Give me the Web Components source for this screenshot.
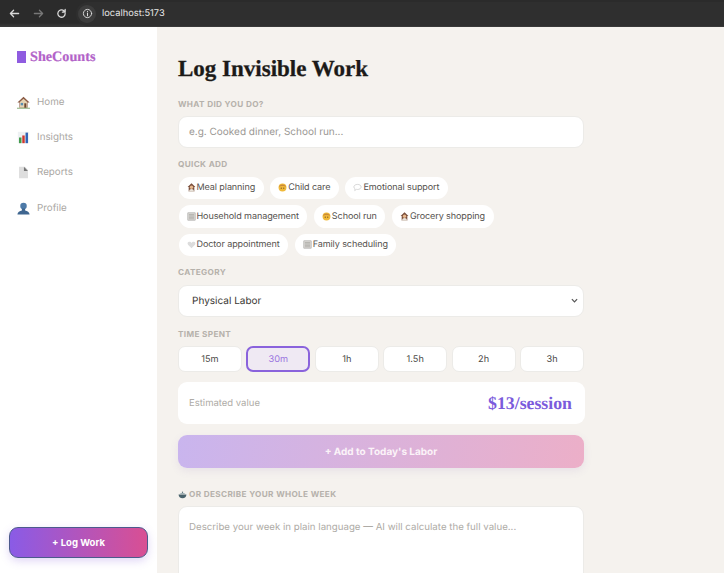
<!DOCTYPE html>
<html><head><meta charset="utf-8">
<style>
html,body{margin:0;padding:0;height:573px;overflow:hidden;background:#f5f2ee;font-family:"Inter","Noto Sans",sans-serif;text-rendering:geometricPrecision}
</style></head><body>
<app-shell>
  <browser-bar slot="bar" url="localhost:5173"></browser-bar>
  <side-bar slot="side"></side-bar>
  <log-form slot="main"></log-form>
</app-shell>
<script>
const EM={
 house:`<svg viewBox="0 0 16 16"><path d="M8 1 .5 8h2.500v6.500h10V8h2.500z" fill="#8a5a44"/><path d="M3.500 7.500 8 3.500l4.500 4v7h-9z" fill="#e6d3b3"/><rect x="4.500" y="8.500" width="3" height="3" fill="#5b8fb0"/><rect x="9" y="9" width="2.500" height="5.500" fill="#6d4630"/><path d="M0 14.500h16v1H0z" fill="#6f9a5a"/></svg>`,
 cook:`<svg viewBox="0 0 16 16"><path d="M8 .5 1 7h2v8h10V7h2z" fill="#7a4f3c"/><circle cx="8" cy="7.500" r="3" fill="#e8b98f"/><path d="M3.500 15.500c0-3 1.500-5 4.500-5s4.500 2 4.500 5z" fill="#e9e3db"/></svg>`,
 chart:`<svg viewBox="0 0 16 16"><rect x="1" y="1" width="14" height="14" fill="#eef1f3"/><rect x="2.500" y="8" width="3" height="7" fill="#3f9a4a"/><rect x="6.500" y="5.500" width="3" height="9.500" fill="#d0382e"/><rect x="10.500" y="2" width="3" height="13" fill="#2f62b5"/></svg>`,
 doc:`<svg viewBox="0 0 16 16"><path d="M2.500 1H10l3.500 4v10h-11z" fill="#dedede"/><path d="M8.500 1l5 5h-5z" fill="#777"/></svg>`,
 person:`<svg viewBox="0 0 16 16"><circle cx="8" cy="5" r="4" fill="#4d7aa8"/><path d="M.5 15.500c0-3 3-4.500 5.500-5V8h4v2.500c2.500.5 5.500 2 5.500 5z" fill="#3f6690"/></svg>`,
 face:`<svg viewBox="0 0 16 16"><circle cx="8" cy="8" r="7" fill="#f0b93a"/><path d="M1.500 7c1-6 12-6 13 0-3-2-10-2-13 0z" fill="#c98a3a"/><circle cx="5.800" cy="9.200" r="1" fill="#6b4a20"/><circle cx="10.200" cy="9.200" r="1" fill="#6b4a20"/></svg>`,
 bubble:`<svg viewBox="0 0 16 16"><path d="M8 2.500c3.800 0 6.500 2 6.500 4.500S11.800 11.500 8 11.500c-.7 0-1.400-.1-2-.2L3 13.500l.6-3.200C2.300 9.500 1.500 8.300 1.500 7 1.500 4.500 4.200 2.500 8 2.500z" fill="#fff" stroke="#bbb"/></svg>`,
 memo:`<svg viewBox="0 0 16 16"><rect x="1.500" y="1.500" width="13" height="13" fill="#d8d6d2" stroke="#8e8c88" stroke-width=".8"/><path d="M3.500 4.500h9M3.500 7h9M3.500 9.500h9M3.500 12h9" stroke="#8e8c88" stroke-width=".8"/></svg>`,
 heart:`<svg viewBox="0 0 16 16"><path d="M8 14.500 1.800 8.300C.2 6.500 1 3 4.300 3 6 3 7.300 4 8 5.200 8.700 4 10 3 11.700 3 15 3 15.800 6.500 14.200 8.300z" fill="#dcdcdc"/></svg>`,
 pot:`<svg viewBox="0 0 16 16"><path d="M1 8h14c0 4-3 6.500-7 6.500S1 12 1 8z" fill="#49626b"/><path d="M3 7c1-2.500 9-2.500 10 0z" fill="#9fb0b5"/><rect x="7" y="3" width="2" height="2" fill="#49626b"/></svg>`
};
function def(name,css,html){
  customElements.define(name,class extends HTMLElement{
    connectedCallback(){ if(this.shadowRoot)return;
      const r=this.attachShadow({mode:"open"});
      r.innerHTML=`<style>${css}</style>`+(typeof html==="function"?html(this):html);
    }
  });
}
const SERIF='"Liberation Serif","DejaVu Serif",serif';

def("app-shell",`
:host{display:grid;grid-template-columns:157px 1fr;grid-template-rows:27px 546px;width:724px;height:573px;overflow:hidden}
::slotted([slot=bar]){grid-column:1/3}
`,`<slot name="bar"></slot><slot name="side"></slot><slot name="main"></slot>`);

def("browser-bar",`
:host{display:flex;align-items:center;height:27px;box-sizing:border-box;background:linear-gradient(#2b2b2b,#2b2b2b 85%,#3b3b3b);color:#e6e6e6;font:400 9.300px "Inter",sans-serif;padding-left:9px}
svg{width:11px;height:11px;fill:none;stroke-width:1.400;stroke-linecap:round;stroke-linejoin:round;flex:none}
.nav{display:flex;gap:12.500px;margin-right:9px}
.omni{display:flex;align-items:center;gap:6px;flex:1;height:24px;background:#2f2f2f;border-radius:12px 0 0 12px;padding-left:2px}
.info{width:18px;height:18px;border-radius:50%;background:#3d3d3d;display:flex;align-items:center;justify-content:center}
`,h=>`<div class="nav">
<svg viewBox="0 0 12 12" stroke="#d8d8d8"><path d="M10.500 6h-9M5 2.500 1.500 6 5 9.500"/></svg>
<svg viewBox="0 0 12 12" stroke="#777"><path d="M1.500 6h9M7 2.500 10.500 6 7 9.500"/></svg>
<svg viewBox="0 0 12 12" stroke="#d8d8d8"><path d="M10 6a4 4 0 1 1-1.200-2.800L10 4.400M10 1.500v3H7"/></svg>
</div><div class="omni"><span class="info"><svg viewBox="0 0 12 12" stroke="#ddd"><circle cx="6" cy="6" r="4.500" stroke-width="1"/><path d="M6 5.500v3M6 3.500v.2" stroke-width="1.100"/></svg></span><span>${h.getAttribute("url")}</span></div>`);

def("nav-item",`
:host{display:flex;align-items:center;gap:7px;height:35.400px;font:400 9.800px "Inter",sans-serif;color:#aaa7a3}
svg{width:13px;height:13px;display:block}
`,h=>EM[h.getAttribute("icon")]+`<slot></slot>`);

def("side-bar",`
:host{display:flex;flex-direction:column;background:#fff;padding:0 9px 15px;box-sizing:border-box;height:546px}
.logo{display:flex;align-items:center;gap:4px;margin:23px 0 0 8px;height:14px;font:700 14.200px ${SERIF};color:#b263c9;-webkit-text-stroke:.2px #b263c9}
.sq{width:9px;height:12px;background:#8f5ce0}
nav{display:flex;flex-direction:column;margin:20.400px 0 0 8px}
.spacer{flex:1}
button{height:31px;width:139px;box-sizing:border-box;border-radius:9px;border:1.500px solid #4c5a8c;background:linear-gradient(90deg,#8a5be6,#d94f93);color:#fff;font:700 9.500px "Inter",sans-serif;box-shadow:0 3px 9px rgba(130,90,220,.25)}
`,`<div class="logo"><span class="sq"></span><span>SheCounts</span></div>
<nav><nav-item icon="house">Home</nav-item><nav-item icon="chart">Insights</nav-item><nav-item icon="doc">Reports</nav-item><nav-item icon="person">Profile</nav-item></nav>
<div class="spacer"></div><button>+ Log Work</button>`);

def("quick-chip",`
:host{display:inline-flex;align-items:center;gap:1px;height:22.500px;padding:0 8.500px 0 8px;background:#fff;border-radius:12px;font:400 9.050px "Inter",sans-serif;color:#55524e;letter-spacing:-.1px;white-space:nowrap}
svg{width:9px;height:9px;display:block;flex:none}
`,h=>EM[h.getAttribute("icon")]+`<slot></slot>`);

def("field-label",`
:host{display:flex;align-items:center;gap:2px;font:700 8.200px "Inter",sans-serif;letter-spacing:.35px;color:#b5b1ab;text-transform:uppercase;height:12px}
svg{width:9px;height:9px}
`,h=>(h.getAttribute("icon")?EM[h.getAttribute("icon")]:"")+`<slot></slot>`);

def("time-pills",`
:host{display:grid;grid-template-columns:repeat(6,1fr);gap:4.500px;height:26px}
span{display:flex;align-items:center;justify-content:center;background:#fff;border:1px solid #ecebe8;border-radius:7px;font:400 9.200px "Inter",sans-serif;color:#4c4a47;box-sizing:border-box}
span.on{background:#efe9f3;border:2px solid #8a63dc;color:#9a75e0}
`,`<span>15m</span><span class="on">30m</span><span>1h</span><span>1.5h</span><span>2h</span><span>3h</span>`);

def("log-form",`
:host{display:block;background:#f5f2ee;padding:0 0 0 21px;height:546px;overflow:hidden;box-sizing:border-box}
.col{width:406px;display:flex;flex-direction:column}
h1{margin:29px 0 0;font:700 23px/26px ${SERIF};color:#1c1a18;height:26px;white-space:nowrap;-webkit-text-stroke:.3px #1c1a18}
field-label.l1{margin-top:16px}
.box{display:flex;align-items:center;background:#fff;border:1px solid #ecebe8;border-radius:9px;box-sizing:border-box}
.input{height:32px;margin-top:6px;padding-left:10px;font:400 10px "Inter",sans-serif;color:#9a9793}
.l2{margin-top:10px}
.chips{display:flex;flex-wrap:wrap;gap:6px 6.500px;margin-top:6.500px;width:340px;padding-left:.5px}
.l3{margin-top:10px}
.select{height:32.500px;margin-top:6.500px;padding:0 5px 0 13px;justify-content:space-between;font:400 10px "Inter",sans-serif;color:#3a3835}
.select svg{width:7px;height:7px;fill:none;stroke:#555;stroke-width:1.400}
.l4{margin-top:11px}
time-pills{margin-top:6px}
.est{height:42px;margin-top:10px;padding:0 13px 0 11px;justify-content:space-between;border:none;width:407px}
.est span{font:400 9.500px "Inter",sans-serif;color:#aeaba6}
.est b{font:700 17.800px ${SERIF};color:#7b5bdc}
.add{height:33px;margin-top:11px;width:406px;border-radius:9px;display:flex;align-items:center;justify-content:center;background:linear-gradient(100deg,#c9b5ee,#ecafc8);color:#fbf3f8;font:700 10px "Inter",sans-serif;box-shadow:0 3px 9px rgba(120,90,180,.1)}
.l5{margin-top:20px}
.ta{height:90px;margin-top:6px;padding:14.500px 10px;align-items:flex-start;font:400 9.700px "Inter",sans-serif;color:#aeaba6}
`,`<div class="col">
<h1>Log Invisible Work</h1>
<field-label class="l1">What did you do?</field-label>
<div class="box input">e.g. Cooked dinner, School run...</div>
<field-label class="l2">Quick add</field-label>
<div class="chips">
<quick-chip icon="cook">Meal planning</quick-chip><quick-chip icon="face">Child care</quick-chip><quick-chip icon="bubble">Emotional support</quick-chip>
<quick-chip icon="memo">Household management</quick-chip><quick-chip icon="face">School run</quick-chip><quick-chip icon="cook">Grocery shopping</quick-chip>
<quick-chip icon="heart">Doctor appointment</quick-chip><quick-chip icon="memo">Family scheduling</quick-chip>
</div>
<field-label class="l3">Category</field-label>
<div class="box select"><span>Physical Labor</span><svg viewBox="0 0 8 8"><path d="M1 2.500l3 3 3-3"/></svg></div>
<field-label class="l4">Time spent</field-label>
<time-pills></time-pills>
<div class="box est"><span>Estimated value</span><b>$13/session</b></div>
<div class="add">+ Add to Today's Labor</div>
<field-label class="l5" icon="pot">Or describe your whole week</field-label>
<div class="box ta">Describe your week in plain language — AI will calculate the full value...</div>
</div>`);
</script>
</body></html>
